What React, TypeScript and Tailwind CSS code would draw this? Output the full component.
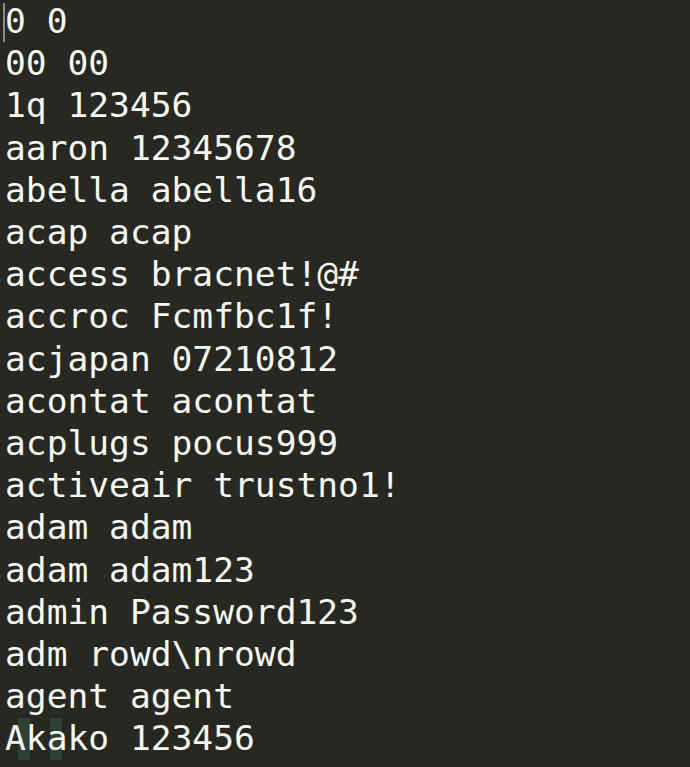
import React from "react";

const lines: string[] = [
  "0 0",
  "00 00",
  "1q 123456",
  "aaron 12345678",
  "abella abella16",
  "acap acap",
  "access bracnet!@#",
  "accroc Fcmfbc1f!",
  "acjapan 07210812",
  "acontat acontat",
  "acplugs pocus999",
  "activeair trustno1!",
  "adam adam",
  "adam adam123",
  "admin Password123",
  "adm rowd\\nrowd",
  "agent agent",
  "Akako 123456",
];

const App: React.FC = () => {
  return (
    <div className="relative w-[690px] h-[767px] overflow-hidden bg-[#272822]">
      {/* cursor */}
      <div className="absolute left-[3px] top-[3px] w-[2px] h-[39px] bg-[#8a8a86]" />
      {/* faint watermark blocks behind last line */}
      <div className="absolute left-[18px] top-[718px] flex gap-[20px] h-[42px]">
        <div className="w-[12px] h-full bg-[#2c4236]" />
        <div className="w-[12px] h-full bg-[#2c4236]" />
      </div>
      <div
        className="relative pl-[5px] text-[34.6px] leading-[42.2px] text-[#f8f8f2] whitespace-pre"
        style={{ fontFamily: '"DejaVu Sans Mono", "Liberation Mono", monospace' }}
      >
        {lines.map((line, i) => (
          <div key={i}>{line}</div>
        ))}
      </div>
    </div>
  );
};

export default App;
